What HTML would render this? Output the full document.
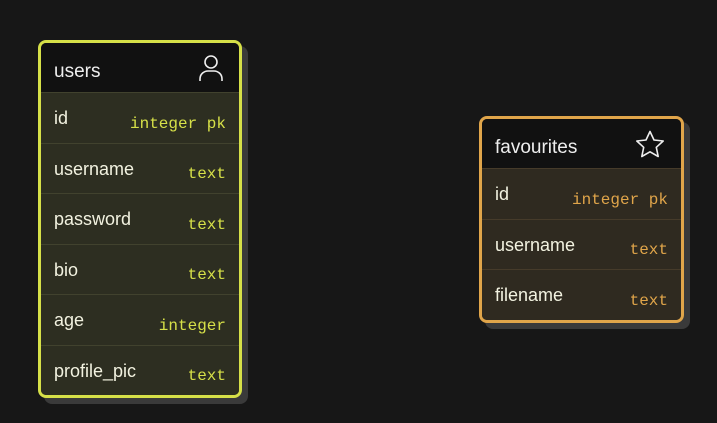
<!DOCTYPE html><html><head><style>
body{margin:0;width:717px;height:423px;background:#171717;position:relative;overflow:hidden;font-family:"Liberation Sans",sans-serif}
.c{position:absolute;border:3px solid;border-radius:8px;overflow:hidden;box-shadow:6px 6px 0 #3a3a3a}
.h{height:49px;background:#111;color:#eee;font-size:19px;display:flex;align-items:center;justify-content:space-between;padding:0 16px 0 13px;box-sizing:border-box}
.h span{margin-top:8px}
.r{height:50.5px;box-sizing:border-box;border-top:1px solid;display:flex;justify-content:space-between;align-items:center;padding:0 13px 0 13px;color:#f2f2e0;font-size:18px}
.r span:first-child{margin-top:2px}
.r span:last-child{font-family:"Liberation Mono",monospace;font-size:16px;margin-top:12px}
.u{left:38px;top:40px;width:198px;border-color:#d6e048}
.u .r{background:#2d2e21;border-color:#41422e}
.u .r span:last-child{color:#d6e048}
.f{left:479px;top:116px;width:199px;border-color:#e0a54a}
.f .r{background:#2f2a20;border-color:#463b2a}
.f .r span:last-child{color:#e0a54a}
</style></head><body>
<div class="c u"><div class="h"><span>users</span><svg width="24" height="28" viewBox="0 0 24 28" fill="none" stroke="#eee" stroke-width="1.6"><circle cx="12" cy="8" r="6"/><path d="M1 27v-2c0-5 4-8 8-8h6c4 0 8 3 8 8v2"/></svg></div>
<div class="r"><span>id</span><span>integer pk</span></div>
<div class="r"><span>username</span><span>text</span></div>
<div class="r"><span>password</span><span>text</span></div>
<div class="r"><span>bio</span><span>text</span></div>
<div class="r"><span>age</span><span>integer</span></div>
<div class="r"><span>profile_pic</span><span>text</span></div></div>
<div class="c f"><div class="h"><span>favourites</span><svg width="30" height="28" viewBox="0 0 30 28" fill="none" stroke="#eee" stroke-width="1.6" stroke-linejoin="round"><path d="M15 1.5l4 8.5 9.2 1-6.9 6.3 1.9 9.2L15 21.8 6.8 26.5l1.9-9.2L1.8 11l9.2-1z"/></svg></div>
<div class="r"><span>id</span><span>integer pk</span></div>
<div class="r"><span>username</span><span>text</span></div>
<div class="r"><span>filename</span><span>text</span></div></div>
</body></html>
